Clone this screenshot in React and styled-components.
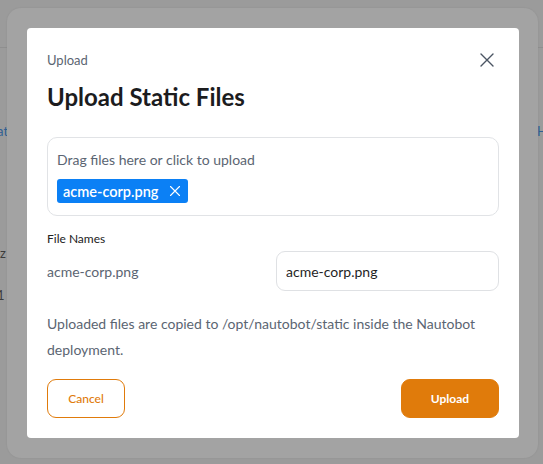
import React from "react";
import styled, { createGlobalStyle } from "styled-components";

const Global = createGlobalStyle`
  html, body { margin: 0; padding: 0; }
  body {
    width: 543px;
    height: 464px;
    overflow: hidden;
    background: #9b9b9b;
    font-family: "Lato", "Noto Sans", sans-serif;
  }
`;

/* dimmed page behind the dialog */
const Page = styled.div`
  position: relative;
  width: 543px;
  height: 464px;
  overflow: hidden;
  background: #9b9b9b;
`;

const TopBar = styled.div`
  height: 47px;
  border-bottom: 1px solid #8f8f8f;
`;

const SideText = styled.span`
  position: absolute;
  top: ${(p) => p.$top}px;
  ${(p) => (p.$right ? "right: -4px;" : "left: -3px;")}
  font-size: 13px;
  color: ${(p) => (p.$link ? "#2f5f93" : "#3c3c3c")};
  font-family: "Lato", sans-serif;
`;

const Sheet = styled.div`
  position: absolute;
  left: 7px;
  top: 8px;
  width: 531px;
  height: 450px;
  background: #a3a3a3;
  border-radius: 14px;
  box-shadow: 0 0 2px rgba(0, 0, 0, 0.08);
  display: flex;
  justify-content: flex-start;
  padding: 20px 0 0 20px;
  box-sizing: border-box;
`;

const Dialog = styled.div`
  width: 492px;
  height: 410px;
  box-sizing: border-box;
  background: #ffffff;
  border-radius: 4px;
  padding: 20px 20px 20px 20px;
  display: flex;
  flex-direction: column;
`;

const Header = styled.div`
  display: flex;
  align-items: center;
  justify-content: space-between;
  height: 24px;
`;

const Eyebrow = styled.span`
  font-size: 13px;
  color: #5b6572;
`;

const CloseButton = styled.button`
  border: 0;
  background: none;
  padding: 0;
  margin-right: 4px;
  width: 16px;
  height: 16px;
  display: flex;
  color: #4b5563;
  cursor: pointer;
`;

const Title = styled.h2`
  margin: 10px 0 0;
  font-size: 24px;
  line-height: 29px;
  font-weight: 700;
  color: #1c1c1e;
`;

const DropZone = styled.div`
  margin-top: 26px;
  height: 79px;
  box-sizing: border-box;
  border: 1px solid #e1e3e6;
  border-radius: 10px;
  padding: 12px 9px;
  display: flex;
  flex-direction: column;
  align-items: flex-start;
  gap: 9px;
`;

const DropHint = styled.span`
  font-size: 14px;
  line-height: 20px;
  color: #5b6572;
`;

const Chip = styled.span`
  display: inline-flex;
  align-items: center;
  gap: 11px;
  height: 24px;
  padding: 0 7px 0 6px;
  border-radius: 3px;
  background: #0b80f5;
  color: #ffffff;
  font-size: 14.5px;
  font-weight: 600;
`;

const Label = styled.div`
  margin-top: 15px;
  font-size: 12px;
  line-height: 16px;
  color: #222;
`;

const NameRow = styled.div`
  margin-top: 4px;
  display: grid;
  grid-template-columns: 1fr 223px;
  align-items: center;
`;

const NameText = styled.span`
  font-size: 14px;
  color: #5b6572;
`;

const NameInput = styled.input`
  box-sizing: border-box;
  height: 40px;
  width: 100%;
  border: 1px solid #dfe1e4;
  border-radius: 9px;
  padding: 0 9px;
  font: inherit;
  font-size: 14px;
  color: #1f1f1f;
  outline: none;
`;

const Note = styled.p`
  margin: 20px 0 0;
  font-size: 14px;
  line-height: 26px;
  color: #5b6572;
`;

const Footer = styled.div`
  margin-top: auto;
  display: flex;
  justify-content: space-between;
  align-items: center;
`;

const Button = styled.button`
  height: 39px;
  box-sizing: border-box;
  border-radius: 9px;
  font-family: inherit;
  font-size: 12px;
  cursor: pointer;
  padding: 0;
  width: ${(p) => (p.$primary ? "98px" : "78px")};
  border: 1px solid #e07b0b;
  background: ${(p) => (p.$primary ? "#e07b0b" : "#ffffff")};
  color: ${(p) => (p.$primary ? "#ffffff" : "#e07b0b")};
  font-weight: ${(p) => (p.$primary ? 700 : 500)};
`;

const Cross = ({ size = 16, stroke = 1.4 }) => (
  <svg width={size} height={size} viewBox="0 0 16 16" fill="none">
    <path d="M2 2L14 14M14 2L2 14" stroke="currentColor" strokeWidth={stroke} strokeLinecap="round" />
  </svg>
);

export default function App() {
  return (
    <Page>
      <Global />
      <TopBar />
      <SideText $top={123} $link>at</SideText>
      <SideText $top={123} $right $link>H</SideText>
      <SideText $top={245}>iz</SideText>
      <SideText $top={287}>1</SideText>
      <Sheet>
        <Dialog>
          <Header>
            <Eyebrow>Upload</Eyebrow>
            <CloseButton aria-label="Close">
              <Cross />
            </CloseButton>
          </Header>
          <Title>Upload Static Files</Title>
          <DropZone>
            <DropHint>Drag files here or click to upload</DropHint>
            <Chip>
              acme-corp.png
              <Cross size={12} stroke={1.5} />
            </Chip>
          </DropZone>
          <Label>File Names</Label>
          <NameRow>
            <NameText>acme-corp.png</NameText>
            <NameInput defaultValue="acme-corp.png" />
          </NameRow>
          <Note>
            Uploaded files are copied to /opt/nautobot/static inside the Nautobot deployment.
          </Note>
          <Footer>
            <Button>Cancel</Button>
            <Button $primary>Upload</Button>
          </Footer>
        </Dialog>
      </Sheet>
    </Page>
  );
}
